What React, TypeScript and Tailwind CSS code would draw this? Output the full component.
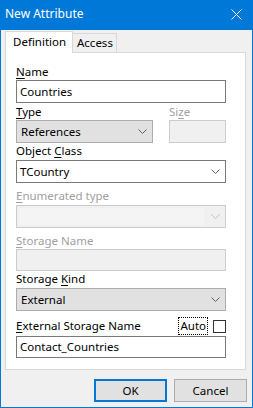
import React from "react";

const font = { fontFamily: '"Noto Sans", "Open Sans", sans-serif' };

function Chevron({ color = "#606060" }: { color?: string }) {
  return (
    <svg width="9" height="5" viewBox="0 0 9 5" className="block">
      <path d="M0.5 0.5 L4.5 4.5 L8.5 0.5" fill="none" stroke={color} strokeWidth="1" />
    </svg>
  );
}

function Label({ children, disabled = false, className = "" }: { children: React.ReactNode; disabled?: boolean; className?: string }) {
  return (
    <div className={`h-[16px] leading-[16px] whitespace-nowrap ${disabled ? "text-[#a0a0a0]" : "text-black"} ${className}`}>
      {children}
    </div>
  );
}

function U({ children }: { children: React.ReactNode }) {
  return <span className="underline underline-offset-[2px] decoration-1">{children}</span>;
}

export default function App() {
  return (
    <div className="w-[253px] h-[408px] bg-[#0078d7] flex flex-col text-[11.5px]" style={font}>
      {/* Title bar */}
      <div className="h-[30px] shrink-0 flex items-center justify-between pl-[5px] pr-[11px] text-white text-[12px]">
        <span className="leading-[16px] -mt-[2px]">New Attribute</span>
        <svg width="11" height="11" viewBox="0 0 11 11" className="-mt-[2px]">
          <path d="M0.5 0.5 L10.5 10.5 M10.5 0.5 L0.5 10.5" stroke="white" strokeWidth="1" />
        </svg>
      </div>
      {/* Body */}
      <div className="flex-1 mx-px mb-px bg-[#f0f0f0] flex flex-col">
        {/* Tabs */}
        <div className="h-[22px] mt-px ml-[4px] flex items-end relative z-10">
          <div className="w-[68px] h-[22px] bg-white border border-[#d9d9d9] border-b-0 flex items-start pl-[7px] pt-[2px] leading-[16px]">
            Definition
          </div>
          <div className="w-[44px] h-[19px] bg-[#f0f0f0] border border-[#d9d9d9] border-l-0 border-b-0 flex items-start pl-[4px] pt-[1px] leading-[16px] mb-[1px]">
            Access
          </div>
        </div>
        {/* Panel */}
        <div className="ml-[4px] w-[241px] h-[318px] -mt-px bg-white border border-[#d9d9d9] pl-[10px] pt-[11px] flex flex-col">
          <div className="w-[210px] flex flex-col">
            <Label>
              <U>N</U>ame
            </Label>
            <div className="h-[23px] border border-[#7a7a7a] bg-white flex items-center pl-[3px] leading-[16px]">
              Countries
            </div>

            <div className="mt-[1px] flex gap-[16px]">
              <div className="w-[137px] flex flex-col">
                <Label>
                  <U>T</U>ype
                </Label>
                <div className="h-[23px] border border-[#adadad] bg-[#e1e1e1] flex items-center justify-between pl-[4px] pr-[5px] leading-[16px]">
                  <span>References</span>
                  <Chevron />
                </div>
              </div>
              <div className="w-[57px] flex flex-col">
                <Label disabled>
                  Si<U>z</U>e
                </Label>
                <div className="h-[23px] border border-[#cccccc] bg-[#f0f0f0]" />
              </div>
            </div>

            <Label className="mt-0">
              Object <U>C</U>lass
            </Label>
            <div className="mt-px h-[23px] border border-[#7a7a7a] bg-white flex items-center justify-between pl-[3px] pr-[5px] leading-[16px]">
              <span>TCountry</span>
              <Chevron />
            </div>

            <Label disabled className="mt-[5px]">
              <U>E</U>numerated type
            </Label>
            <div className="mt-px h-[23px] border border-[#cccccc] bg-[#f0f0f0] flex items-center justify-between p-[2px] pr-[5px]">
              <div className="w-[185px] h-full bg-[#f4f4f4]" />
              <Chevron color="#bfbfbf" />
            </div>

            <Label disabled className="mt-[5px]">
              <U>S</U>torage Name
            </Label>
            <div className="h-[22px] border border-[#cccccc] bg-[#f0f0f0]" />

            <Label>
              Storage <U>K</U>ind
            </Label>
            <div className="mt-px h-[23px] border border-[#adadad] bg-[#e1e1e1] flex items-center justify-between pl-[4px] pr-[5px] leading-[16px]">
              <span>External</span>
              <Chevron />
            </div>

            <div className="mt-[7px] h-[16px] flex items-center justify-between">
              <Label>
                <U>E</U>xternal Storage Name
              </Label>
              <div className="flex items-center gap-[5px]">
                <span className="h-[18px] leading-[16px] px-px outline-1 outline-dotted outline-black -outline-offset-1 border border-transparent">
                  Auto
                </span>
                <div className="w-[13px] h-[13px] border border-[#333333] bg-white" />
              </div>
            </div>
            <div className="mt-[2px] h-[22px] border border-[#7a7a7a] bg-white flex items-center pl-[3px] leading-[16px]">
              Contact_Countries
            </div>
          </div>
        </div>
        {/* Buttons */}
        <div className="mt-[9px] flex justify-end gap-[7px] pr-[5px]">
          <button className="w-[73px] h-[23px] border-2 border-[#0078d7] bg-[#e1e1e1] text-black leading-[16px]">
            OK
          </button>
          <button className="w-[73px] h-[23px] border border-[#adadad] bg-[#e1e1e1] text-black leading-[16px]">
            Cancel
          </button>
        </div>
      </div>
    </div>
  );
}
